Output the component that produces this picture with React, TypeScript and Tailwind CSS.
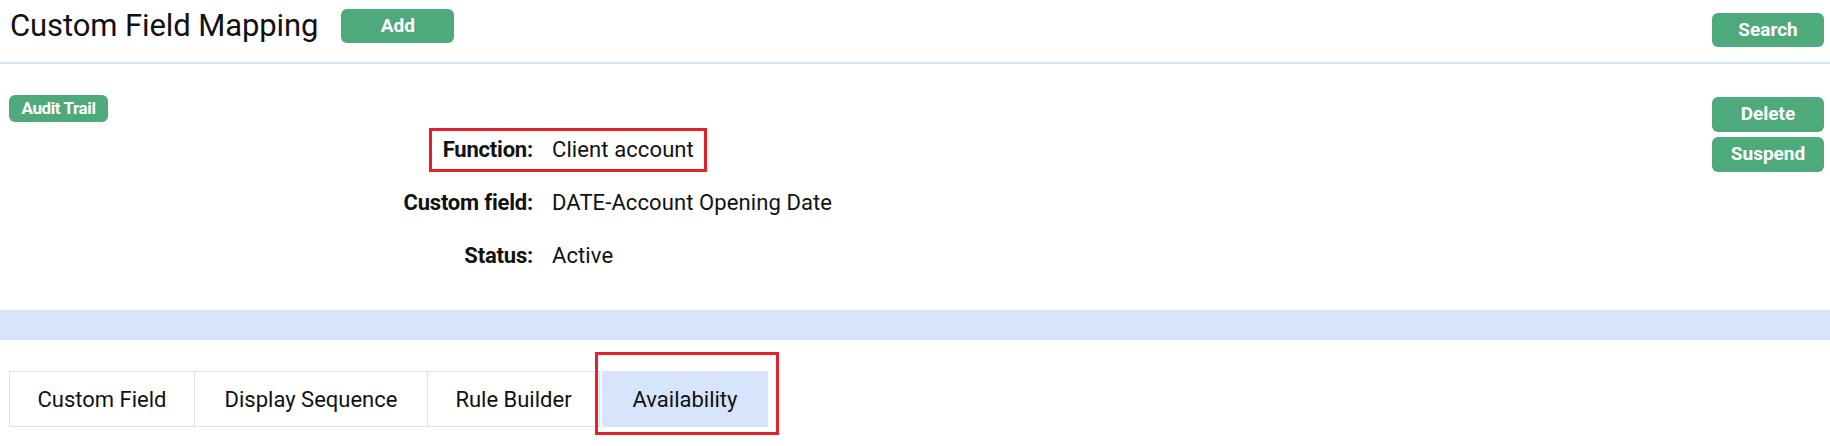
import React from "react";

const green = "bg-[#4ea97b] hover:bg-[#45996f] text-white font-bold rounded-[6px]";

const details = [
  { label: "Function:", value: "Client account" },
  { label: "Custom field:", value: "DATE-Account Opening Date" },
  { label: "Status:", value: "Active" },
];

const tabs = [
  { name: "Custom Field", width: "w-[184px]" },
  { name: "Display Sequence", width: "w-[233px]" },
  { name: "Rule Builder", width: "w-[172px]" },
];

export default function App() {
  return (
    <div
      className="w-[1830px] h-[446px] bg-white text-[#111] overflow-hidden"
      style={{ fontFamily: "Roboto, 'Noto Sans', sans-serif" }}
    >
      {/* header */}
      <div className="h-[64px] flex items-start px-[10px] border-b-2 border-[#d7e5fc]">
        <h1 className="mt-[6px] text-[31px] leading-[40px] tracking-[-0.1px]">Custom Field Mapping</h1>
        <button className={`${green} ml-[23px] mt-[9px] w-[113px] h-[34px] text-[19px]`}>Add</button>
        <button className={`${green} ml-auto mr-[-4px] mt-[13px] w-[112px] h-[34px] text-[19px]`}>
          Search
        </button>
      </div>

      {/* record */}
      <div className="h-[246px] flex pl-[9px] pr-[6px] pt-[31px]">
        <div className="flex-1">
          <button className={`${green} w-[99px] h-[27px] text-[17px] rounded-[5px] tracking-[-0.4px]`}>
            Audit Trail
          </button>
          <div className="relative mt-[1px] ml-[324px] w-[520px]">
            {details.map((d) => (
              <div key={d.label} className="h-[53px] flex items-center text-[22px]">
                <span className="w-[200px] text-right font-bold tracking-[-0.2px]">{d.label}</span>
                <span className="ml-[19px] tracking-[0.1px]">{d.value}</span>
              </div>
            ))}
            <div className="absolute left-[96px] top-[5px] w-[278px] h-[44px] border-[3px] border-[#e5202b] pointer-events-none" />
          </div>
        </div>
        <div className="flex flex-col gap-[5px] pt-[2px]">
          <button className={`${green} w-[112px] h-[35px] text-[19px]`}>Delete</button>
          <button className={`${green} w-[112px] h-[35px] text-[19px]`}>Suspend</button>
        </div>
      </div>

      {/* band */}
      <div className="h-[30px] bg-[#d7e5fc]" />

      {/* tabs */}
      <div className="pt-[31px] pl-[9px] flex">
        <div className="flex h-[56px] border-[1.5px] border-[#e0e0e0]">
          {tabs.map((t, i) => (
            <div
              key={t.name}
              className={`${t.width} flex items-center justify-center text-[22px] ${
                i > 0 ? "border-l-[1.5px] border-[#e0e0e0]" : ""
              }`}
            >
              {t.name}
            </div>
          ))}
        </div>
        <div className="relative ml-[2px]">
          <div className="w-[166px] h-[56px] bg-[#d7e5fc] flex items-center justify-center text-[22px]">
            Availability
          </div>
          <div className="absolute -left-[7px] -top-[19px] -right-[11px] -bottom-[8px] border-[3px] border-[#e5202b] pointer-events-none" />
        </div>
      </div>
    </div>
  );
}
